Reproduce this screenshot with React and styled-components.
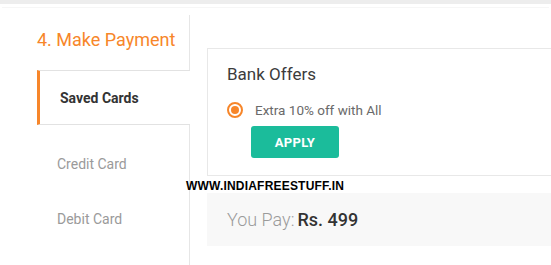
import React from "react";
import styled, { createGlobalStyle } from "styled-components";

const Global = createGlobalStyle`
  html, body { margin: 0; padding: 0; background: #fff; overflow: hidden; }
  body { font-family: Roboto, "Noto Sans", Arial, sans-serif; }
`;

const Page = styled.div`
  position: relative;
  width: 551px;
  height: 265px;
  overflow: hidden;
`;

const TopBar = styled.div`
  height: 4px;
  background: #ededed;
  border-bottom: 3px solid #fff;
  box-shadow: 0 3px 0 -2px #f6f6f6;
`;

const Main = styled.div`
  display: flex;
  margin-top: 8px;
  width: 760px;
`;

const Sidebar = styled.nav`
  width: 189px;
  flex: none;
  border-right: 1px solid #e6e6e6;
  min-height: 260px;
`;

const Title = styled.h2`
  margin: 0 0 0 37px;
  height: 55px;
  line-height: 50px;
  font-size: 18px;
  font-weight: 400;
  color: #f7862a;
  white-space: nowrap;
`;

const ActiveTab = styled.div`
  margin-left: 37px;
  margin-right: -1px;
  height: 53px;
  display: flex;
  align-items: center;
  padding-left: 20px;
  background: #fff;
  border-top: 1px solid #e2e2e2;
  border-bottom: 1px solid #e2e2e2;
  border-left: 3px solid #f7862a;
  font-size: 14px;
  font-weight: 700;
  color: #333;
  position: relative;
`;

const TabList = styled.div`
  margin-top: 11px;
  display: flex;
  flex-direction: column;
`;

const Tab = styled.div`
  height: 55px;
  display: flex;
  align-items: center;
  padding-left: 57px;
  font-size: 14px;
  color: #9a9a9a;
`;

const Content = styled.section`
  flex: 1;
  padding: 33px 0 0 17px;
  display: flex;
  flex-direction: column;
  gap: 17px;
`;

const OfferBox = styled.div`
  border: 1px solid #e8e8e8;
  height: 128px;
  padding: 0 0 0 19px;
  box-sizing: border-box;
`;

const OfferTitle = styled.h3`
  margin: 0;
  padding-top: 15px;
  font-size: 17px;
  line-height: 20px;
  font-weight: 400;
  color: #3c3c3c;
`;

const OfferRow = styled.label`
  display: flex;
  align-items: center;
  gap: 12px;
  margin-top: 18px;
  font-size: 13.5px;
  color: #6a6a6a;
`;

const Radio = styled.span`
  width: 16px;
  height: 16px;
  box-sizing: border-box;
  border-radius: 50%;
  border: 2px solid #f7862a;
  display: flex;
  align-items: center;
  justify-content: center;
  &::after {
    content: "";
    width: 8px;
    height: 8px;
    border-radius: 50%;
    background: #f7862a;
  }
`;

const ApplyButton = styled.button`
  margin: 8px 0 0 24px;
  width: 88px;
  height: 32px;
  border: none;
  border-radius: 3px;
  background: #1bbc9b;
  color: #fff;
  font-family: Roboto, Arial, sans-serif;
  font-weight: 700;
  font-size: 13px;
  letter-spacing: 0.3px;
  display: block;
`;

const PayBox = styled.div`
  background: #f8f8f8;
  height: 53px;
  display: flex;
  align-items: center;
  padding-left: 20px;
  font-size: 18px;
`;

const PayLabel = styled.span`
  color: #9b9b9b;
  font-weight: 300;
  margin-right: 3px;
`;

const PayAmount = styled.span`
  color: #333;
  font-weight: 500;
`;

const Watermark = styled.div`
  position: absolute;
  left: 186px;
  top: 179px;
  font-family: "Liberation Sans", Arial, sans-serif;
  font-weight: 700;
  font-size: 12px;
  color: #000;
  letter-spacing: 0.2px;
  white-space: nowrap;
`;

export default function App() {
  return (
    <Page>
      <Global />
      <TopBar />
      <Main>
        <Sidebar>
          <Title>4. Make Payment</Title>
          <ActiveTab>Saved Cards</ActiveTab>
          <TabList>
            <Tab>Credit Card</Tab>
            <Tab>Debit Card</Tab>
          </TabList>
        </Sidebar>
        <Content>
          <OfferBox>
            <OfferTitle>Bank Offers</OfferTitle>
            <OfferRow>
              <Radio />
              Extra 10% off with All
            </OfferRow>
            <ApplyButton>APPLY</ApplyButton>
          </OfferBox>
          <PayBox>
            <PayLabel>You Pay:</PayLabel>
            <PayAmount>Rs. 499</PayAmount>
          </PayBox>
        </Content>
      </Main>
      <Watermark>WWW.INDIAFREESTUFF.IN</Watermark>
    </Page>
  );
}
